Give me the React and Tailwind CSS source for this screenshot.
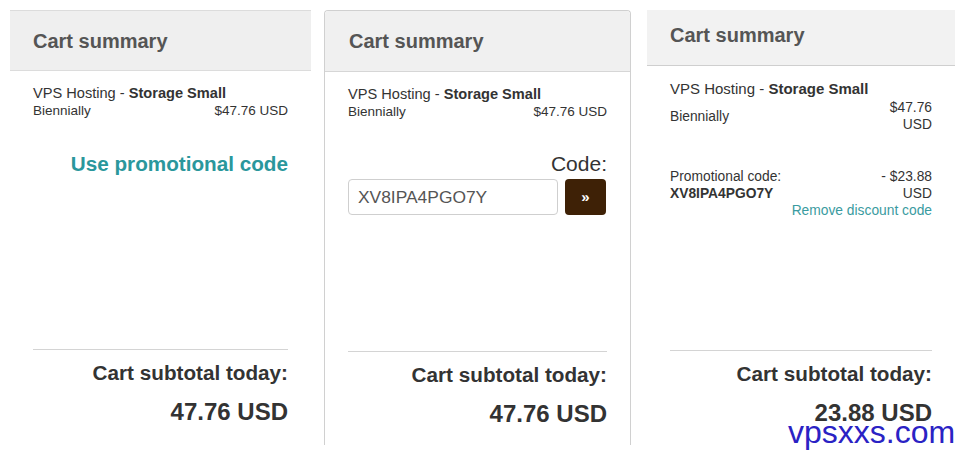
const font = { fontFamily: '"Liberation Sans", Arial, sans-serif' }

function ProductLine({ stacked }) {
  return (
    <div className="text-[#333]">
      <p className={stacked ? 'text-[15px] leading-[16px]' : 'text-[14.6px] leading-[16px]'}>
        VPS Hosting - <span className="font-bold">Storage Small</span>
      </p>
      {stacked ? (
        <div className="mt-[2px] flex items-center justify-between text-[13.8px] leading-[17px]">
          <span>Biennially</span>
          <span className="text-right">
            $47.76
            <br />
            USD
          </span>
        </div>
      ) : (
        <div className="mt-[2px] flex justify-between text-[13.5px] leading-[15px]">
          <span>Biennially</span>
          <span>$47.76 USD</span>
        </div>
      )}
    </div>
  )
}

function Subtotal({ amount }) {
  return (
    <div className="border-t border-[#d4d4d4] pt-[11px] text-right text-[#333]">
      <p className="text-[20.7px] font-bold leading-[24px]">Cart subtotal today:</p>
      <p className="mt-[13px] text-[24px] font-bold leading-[28px]">{amount}</p>
    </div>
  )
}

function Header({ className }) {
  return (
    <div className={className}>
      <h2 className="text-[20px] font-bold leading-[24px] text-[#555]">Cart summary</h2>
    </div>
  )
}

export default function App() {
  return (
    <div style={font} className="relative h-[455px] w-[964px] overflow-hidden bg-white">
      <div className="flex pt-[10px]">
        {/* panel 1 */}
        <section className="ml-[10px] flex h-[435px] w-[301px] flex-col">
          <Header className="flex h-[61px] items-center border-t border-b border-[#dcdcdc] bg-[#efefef] pl-[23px]" />
          <div className="flex flex-1 flex-col px-[23px] pb-[19px] pt-[14px]">
            <ProductLine />
            <p className="mt-[34px] text-right text-[20.7px] font-bold leading-[24px] text-[#2a979c]">
              Use promotional code
            </p>
            <div className="mt-auto">
              <Subtotal amount="47.76 USD" />
            </div>
          </div>
        </section>

        {/* panel 2 */}
        <section className="ml-[13px] flex h-[435px] w-[307px] flex-col rounded-t-[4px] border border-b-0 border-[#d0d0d0]">
          <Header className="flex h-[61px] items-center rounded-t-[4px] border-b border-[#d6d6d6] bg-[#f0f0f0] pl-[24px]" />
          <div className="flex flex-1 flex-col px-[23px] pb-[17px] pt-[14px]">
            <ProductLine />
            <p className="mt-[33px] text-right text-[21px] leading-[24px] text-[#333]">Code:</p>
            <div className="mt-[3px] flex gap-[7px]">
              <input
                readOnly
                value="XV8IPA4PGO7Y"
                style={font}
                className="h-[36px] w-[210px] rounded-[4px] border border-[#cfcfcf] bg-white pl-[9px] text-[17.4px] text-[#555] outline-none"
              />
              <button
                type="button"
                className="grid h-[36px] w-[41px] place-items-center rounded-[4px] bg-[#3e2106] text-[15px] font-bold text-white"
              >
                »
              </button>
            </div>
            <div className="mt-auto">
              <Subtotal amount="47.76 USD" />
            </div>
          </div>
        </section>

        {/* panel 3 */}
        <section className="ml-[16px] flex h-[435px] w-[308px] flex-col">
          <Header className="flex h-[56px] items-center border-b border-[#cfcfcf] bg-[#f2f2f2] pb-[6px] pl-[23px]" />
          <div className="flex flex-1 flex-col px-[23px] pb-[18px] pt-[15px]">
            <ProductLine stacked />
            <div className="mt-[35px] flex justify-between text-[13.8px] leading-[17px] text-[#333]">
              <span>
                Promotional code:
                <br />
                <span className="font-bold">XV8IPA4PGO7Y</span>
              </span>
              <span className="text-right">
                - $23.88
                <br />
                USD
              </span>
            </div>
            <p className="text-right text-[13.8px] leading-[17px] text-[#3a9ba0]">Remove discount code</p>
            <div className="mt-auto">
              <Subtotal amount="23.88 USD" />
            </div>
          </div>
        </section>
      </div>

      <span className="absolute left-[788px] top-[414px] text-[32px] leading-[36px] text-[#2a22c4]">
        vpsxxs.com
      </span>
    </div>
  )
}
